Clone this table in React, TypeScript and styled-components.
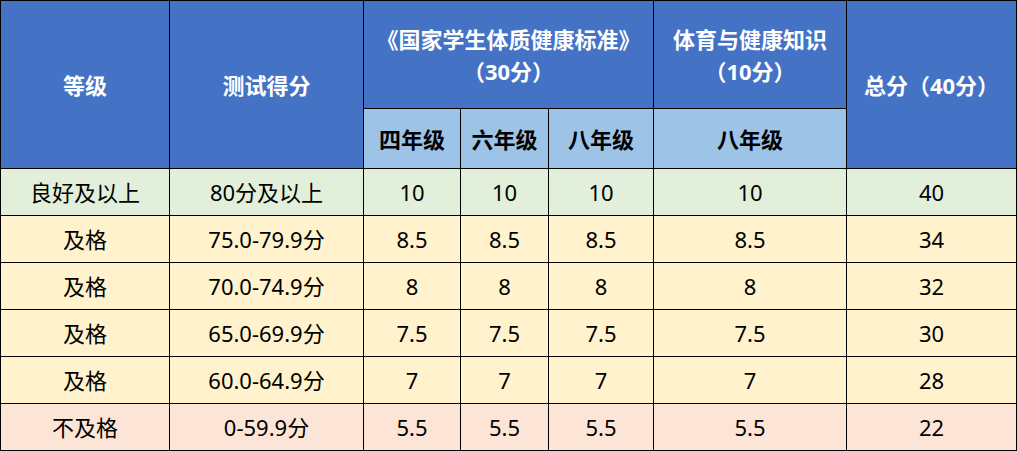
import React from "react";
import styled, { createGlobalStyle } from "styled-components";

const Global = createGlobalStyle`
  html, body { margin: 0; padding: 0; background: #fff; }
  body { font-family: "Noto Sans", "Noto Sans CJK SC", sans-serif; }
`;

const Grid = styled.div`
  display: grid;
  width: 1017px;
  box-sizing: border-box;
  grid-template-columns: 168px 193px 96px 87px 104px 192px 169px;
  grid-template-rows: 107px 59px repeat(6, 46px);
  gap: 1px;
  padding: 1px;
  background: #000;
`;

type Tone = "head" | "sub" | "good" | "pass" | "fail";

const bg: Record<Tone, string> = {
  head: "#4472c4",
  sub: "#9dc3e6",
  good: "#e2efda",
  pass: "#fff2cc",
  fail: "#fce4d6",
};

const Cell = styled.div<{ $tone: Tone; $rows?: number; $cols?: number }>`
  background: ${(p) => bg[p.$tone]};
  grid-row: span ${(p) => p.$rows ?? 1};
  grid-column: span ${(p) => p.$cols ?? 1};
  display: flex;
  flex-direction: column;
  align-items: center;
  justify-content: center;
  text-align: center;
  font-size: 22px;
  line-height: 32px;
  font-weight: ${(p) => (p.$tone === "head" || p.$tone === "sub" ? 700 : 400)};
  color: ${(p) => (p.$tone === "head" ? "#fff" : "#000")};
`;

const rows: { tone: Tone; cells: string[] }[] = [
  { tone: "good", cells: ["良好及以上", "80分及以上", "10", "10", "10", "10", "40"] },
  { tone: "pass", cells: ["及格", "75.0-79.9分", "8.5", "8.5", "8.5", "8.5", "34"] },
  { tone: "pass", cells: ["及格", "70.0-74.9分", "8", "8", "8", "8", "32"] },
  { tone: "pass", cells: ["及格", "65.0-69.9分", "7.5", "7.5", "7.5", "7.5", "30"] },
  { tone: "pass", cells: ["及格", "60.0-64.9分", "7", "7", "7", "7", "28"] },
  { tone: "fail", cells: ["不及格", "0-59.9分", "5.5", "5.5", "5.5", "5.5", "22"] },
];

export default function App() {
  return (
    <>
      <Global />
      <Grid>
        <Cell $tone="head" $rows={2}>等级</Cell>
        <Cell $tone="head" $rows={2}>测试得分</Cell>
        <Cell $tone="head" $cols={3}>
          <span>《国家学生体质健康标准》</span>
          <span>（30分）</span>
        </Cell>
        <Cell $tone="head">
          <span>体育与健康知识</span>
          <span>（10分）</span>
        </Cell>
        <Cell $tone="head" $rows={2}>总分（40分）</Cell>
        <Cell $tone="sub">四年级</Cell>
        <Cell $tone="sub">六年级</Cell>
        <Cell $tone="sub">八年级</Cell>
        <Cell $tone="sub">八年级</Cell>
        {rows.map((r, i) =>
          r.cells.map((c, j) => (
            <Cell key={`${i}-${j}`} $tone={r.tone}>
              {c}
            </Cell>
          ))
        )}
      </Grid>
    </>
  );
}
